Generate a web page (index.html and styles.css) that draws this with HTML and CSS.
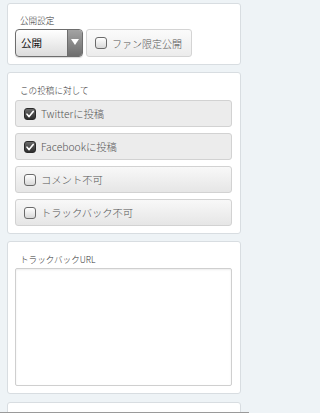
FILE: index.html
```html
<!DOCTYPE html>
<html lang="ja">
<head>
<meta charset="utf-8">
<meta name="viewport" content="width=249">
<link rel="stylesheet" href="styles.css">
</head>
<body>
<div class="page">
  <section class="panel panel-first">
    <div class="label">公開設定</div>
    <div class="controls">
      <div class="select">
        <span class="select-text">公開</span>
        <span class="select-arrow"><svg width="8" height="6" viewBox="0 0 8 6"><path d="M0 0H8L4 6Z" fill="#fff"/></svg></span>
      </div>
      <div class="btn">
        <span class="cb"></span>
        <span class="btn-text">ファン限定公開</span>
      </div>
    </div>
  </section>

  <section class="panel">
    <div class="label">この投稿に対して</div>
    <div class="list">
      <div class="row row-on"><span class="cb cb-on"><svg width="10" height="10" viewBox="0 0 10 10"><path d="M2 5.2L4.1 7.6L8.2 2.4" fill="none" stroke="#fff" stroke-width="1.6" stroke-linecap="round" stroke-linejoin="round"/></svg></span><span class="row-text">Twitterに投稿</span></div>
      <div class="row row-on"><span class="cb cb-on"><svg width="10" height="10" viewBox="0 0 10 10"><path d="M2 5.2L4.1 7.6L8.2 2.4" fill="none" stroke="#fff" stroke-width="1.6" stroke-linecap="round" stroke-linejoin="round"/></svg></span><span class="row-text">Facebookに投稿</span></div>
      <div class="row"><span class="cb"></span><span class="row-text">コメント不可</span></div>
      <div class="row"><span class="cb"></span><span class="row-text">トラックバック不可</span></div>
    </div>
  </section>

  <section class="panel">
    <div class="label">トラックバックURL</div>
    <div class="textarea"></div>
  </section>

  <section class="panel panel-last"></section>
</div>
<div class="bottom-line"></div>
</body>
</html>
```

FILE: styles.css
```css
html, body {
  margin: 0;
  padding: 0;
  background: #eef3f6;
  font-family: "Noto Sans CJK JP", "Liberation Sans", sans-serif;
  font-weight: 300;
  color: #333;
}

body {
  width: 249px;
  height: 413px;
  overflow: hidden;
  position: relative;
}

.page {
  width: 249px;
  box-sizing: border-box;
  padding: 3px 8px 0 7px;
  display: flex;
  flex-direction: column;
  gap: 7px;
}

.panel {
  background: #fff;
  border: 1px solid #d8dde1;
  border-radius: 3px;
  padding: 10px 8px 7px 7px;
}

.panel-first {
  padding-top: 9px;
}

.panel-last {
  margin-top: 1px;
  height: 10px;
}

.label {
  font-size: 8.6px;
  line-height: 14px;
  color: #333;
  padding-left: 5px;
  margin-bottom: 2px;
}

.controls {
  display: flex;
  gap: 3px;
}

.select {
  width: 66px;
  height: 26px;
  border: 1px solid #6d6d6d;
  border-radius: 4px;
  display: flex;
  overflow: hidden;
  background: linear-gradient(#ffffff, #dcdcdc);
  box-shadow: 0 1px 1px rgba(0,0,0,0.15);
}

.select-text {
  flex: 1;
  font-size: 10.5px;
  font-weight: 400;
  line-height: 26px;
  padding-left: 5px;
  color: #111;
}

.select-arrow {
  width: 15px;
  background: linear-gradient(#a3a3a3, #6e6e6e);
  border-left: 1px solid #6d6d6d;
  display: flex;
  align-items: center;
  justify-content: center;
  padding-bottom: 2px;
  box-sizing: border-box;
}

.btn {
  height: 26px;
  border: 1px solid #d4d4d4;
  border-radius: 3px;
  background: linear-gradient(#fbfbfb, #ececec);
  display: flex;
  align-items: center;
  padding: 0 9px 0 8px;
}

.btn-text {
  font-size: 10px;
  color: #555;
  margin-left: 5px;
}

.cb {
  width: 10px;
  height: 10px;
  border: 1px solid #6a6a6a;
  border-radius: 3px;
  background: linear-gradient(#ffffff, #d8d8d8);
  display: flex;
  align-items: center;
  justify-content: center;
  flex: none;
}

.cb-on {
  border-color: #2a2a2a;
  background: linear-gradient(#6a6a6a, #2e2e2e);
}

.list {
  padding-top: 1px;
  display: flex;
  flex-direction: column;
  gap: 6px;
}

.row {
  height: 25px;
  border: 1px solid #d2d2d2;
  border-radius: 3px;
  background: linear-gradient(#f8f8f8, #e6e6e6);
  display: flex;
  align-items: center;
  padding-left: 8px;
}

.row-on {
  background: #ececec;
}

.row-text {
  font-size: 10.3px;
  color: #555;
  margin-left: 5px;
}

.textarea {
  height: 116px;
  border: 1px solid #cfcfcf;
  border-radius: 2px;
  box-shadow: inset 0 1px 2px rgba(0,0,0,0.08);
  background: #fff;
}

.bottom-line {
  position: absolute;
  left: 0;
  right: 0;
  bottom: 0;
  height: 1px;
  background: #9a9a9a;
}
```
